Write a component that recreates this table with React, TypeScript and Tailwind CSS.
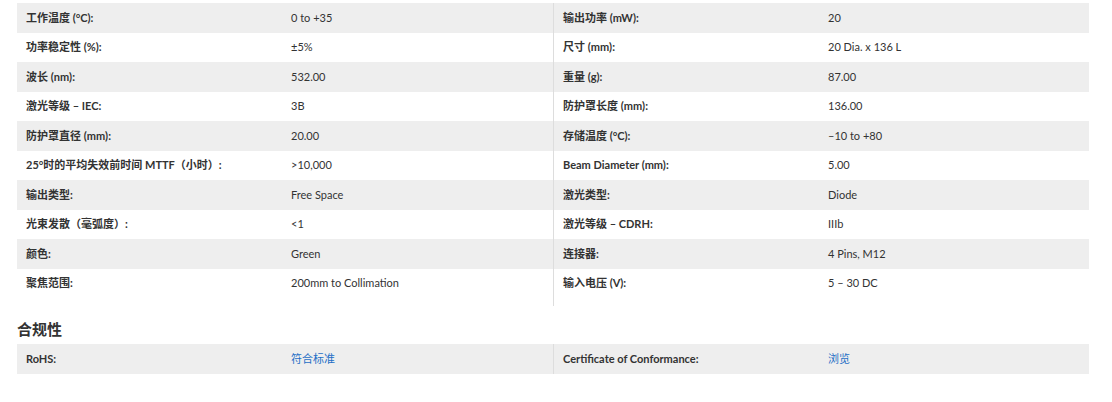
import React from "react";

type Spec = { label: string; value: string; link?: boolean };

const leftSpecs: Spec[] = [
  { label: "工作温度 (°C):", value: "0 to +35" },
  { label: "功率稳定性 (%):", value: "±5%" },
  { label: "波长 (nm):", value: "532.00" },
  { label: "激光等级 – IEC:", value: "3B" },
  { label: "防护罩直径 (mm):", value: "20.00" },
  { label: "25°时的平均失效前时间 MTTF（小时）:", value: ">10,000" },
  { label: "输出类型:", value: "Free Space" },
  { label: "光束发散（毫弧度）:", value: "<1" },
  { label: "颜色:", value: "Green" },
  { label: "聚焦范围:", value: "200mm to Collimation" },
];

const rightSpecs: Spec[] = [
  { label: "输出功率 (mW):", value: "20" },
  { label: "尺寸 (mm):", value: "20 Dia. x 136 L" },
  { label: "重量 (g):", value: "87.00" },
  { label: "防护罩长度 (mm):", value: "136.00" },
  { label: "存储温度 (°C):", value: "–10 to +80" },
  { label: "Beam Diameter (mm):", value: "5.00" },
  { label: "激光类型:", value: "Diode" },
  { label: "激光等级 – CDRH:", value: "IIIb" },
  { label: "连接器:", value: "4 Pins, M12" },
  { label: "输入电压 (V):", value: "5 – 30 DC" },
];

const font = {
  fontFamily: '"Lato", "Noto Sans CJK SC", sans-serif',
};

const Row: React.FC<{ spec: Spec; index: number }> = ({ spec, index }) => (
  <div
    className={`flex items-center h-[29.5px] text-[11px] text-[#333] ${
      index % 2 === 0 ? "bg-[#eeeeee]" : "bg-white"
    }`}
  >
    <div className="w-[265px] shrink-0 pl-[9px] font-bold">{spec.label}</div>
    <div
      className={`pl-[9px] ${spec.link ? "text-[#1f6ec6]" : "text-[#333]"}`}
    >
      {spec.value}
    </div>
  </div>
);

const SpecColumns: React.FC<{ left: Spec[]; right: Spec[]; padBottom?: boolean }> = ({
  left,
  right,
  padBottom,
}) => (
  <div className="flex">
    <div className="w-[536px]">
      {left.map((s, i) => (
        <Row key={s.label} spec={s} index={i} />
      ))}
    </div>
    <div
      className={`flex-1 border-l border-[#dddddd] ${padBottom ? "pb-[8px]" : ""}`}
    >
      {right.map((s, i) => (
        <Row key={s.label} spec={s} index={i} />
      ))}
    </div>
  </div>
);

export default function App() {
  return (
    <div className="w-[1112px] h-[402px] bg-white" style={font}>
      <div className="ml-[17px] w-[1072px] pt-[3px]">
        <SpecColumns left={leftSpecs} right={rightSpecs} padBottom />
        <h3 className="mt-[12px] mb-[4px] text-[15px] leading-[22px] font-bold text-[#333]">
          合规性
        </h3>
        <SpecColumns
          left={[{ label: "RoHS:", value: "符合标准", link: true }]}
          right={[{ label: "Certificate of Conformance:", value: "浏览", link: true }]}
        />
      </div>
    </div>
  );
}
